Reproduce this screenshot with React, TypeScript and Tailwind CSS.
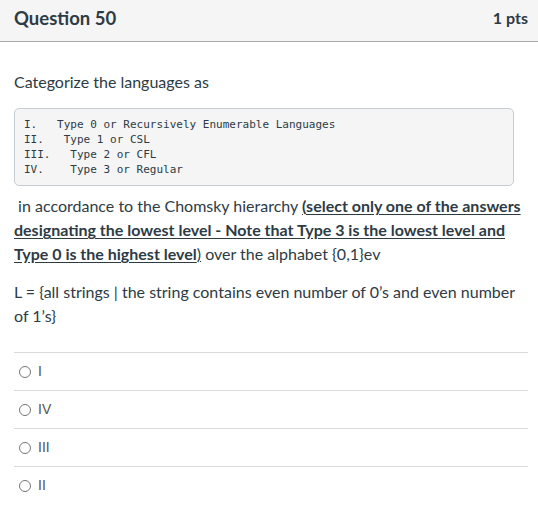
import React from 'react';

const answers = ['I', 'IV', 'III', 'II'];

const codeLines = [
  'I.   Type 0 or Recursively Enumerable Languages',
  'II.   Type 1 or CSL',
  'III.   Type 2 or CFL',
  'IV.    Type 3 or Regular',
];

export default function App() {
  return (
    <div className="w-[538px] h-[513px] bg-white text-[#2d3b45] font-['Lato',sans-serif] overflow-hidden">
      {/* Header */}
      <div className="h-[42px] bg-[#f5f5f5] border-b border-[#a8a8a8] flex items-center justify-between pl-[14px] pr-[10px] pb-[5px]">
        <h2 className="text-[18.5px] font-bold text-[#2d3b45] leading-none">Question 50</h2>
        <span className="text-[16px] font-bold text-[#2d3b45] leading-none">1 pts</span>
      </div>

      {/* Body */}
      <div className="px-[14px] pt-[30px]">
        <p className="text-[16px] leading-[20px] text-[#2d3b45]">Categorize the languages as</p>

        <pre className="mt-[16px] w-[500px] bg-[#f5f5f5] border border-[#c7cdd1] rounded-[5px] pl-[9px] pt-[8px] pb-[8px] font-['DejaVu_Sans_Mono',monospace] text-[11px] leading-[15px] text-[#2d3b45] whitespace-pre">
          {codeLines.join('\n')}
        </pre>

        <p className="mt-[8px] text-[16px] leading-[24px] text-[#2d3b45]">
          {'\u00a0'}in accordance to the Chomsky hierarchy{' '}
          <span className="font-bold underline underline-offset-2">
            (select only one of the answers designating the lowest level - Note that Type 3 is the lowest level and Type 0 is the highest level
          </span>
          <span className="underline">)</span> over the alphabet {'{0,1}'}ev
        </p>

        <p className="mt-[14px] text-[16px] leading-[24px] text-[#2d3b45]">
          L = {'{'}all strings | the string contains even number of 0’s and even number of 1’s{'}'}
        </p>

        {/* Answers */}
        <div className="mt-[24px] w-[514px]">
          {answers.map((a) => (
            <label key={a} className="flex items-center h-[38px] border-t border-[#dadada] pl-[5px] gap-[7px]">
              <span className="w-[12px] h-[12px] rounded-full border border-[#767676] bg-white" />
              <span className="font-['Liberation_Sans',sans-serif] text-[14px] text-[#555]">{a}</span>
            </label>
          ))}
        </div>
      </div>
    </div>
  );
}
